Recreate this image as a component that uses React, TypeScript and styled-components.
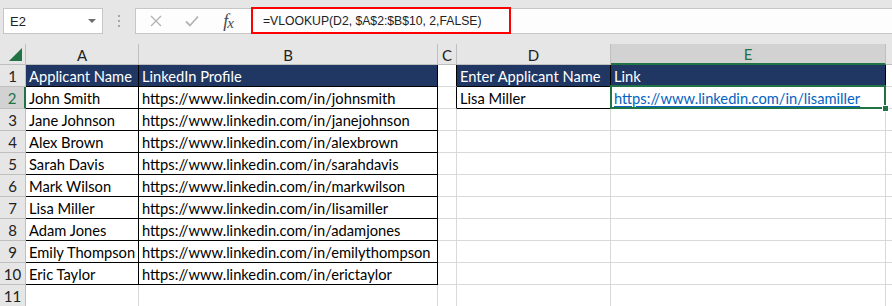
import React from 'react';
import styled, { createGlobalStyle } from 'styled-components';

const Global = createGlobalStyle`
  html, body { margin: 0; padding: 0; background: #ffffff; }
  body { font-family: "Lato", "Liberation Sans", sans-serif; overflow: hidden; }
  #root { width: 892px; height: 306px; overflow: hidden; }
`;

const GREEN = '#217346';
const GRID = '#d9d9d9';
const HEAD_LINE = '#bfbfbf';
const NAVY = '#203764';

const Page = styled.div`
  width: 892px;
  height: 306px;
  display: flex;
  flex-direction: column;
  overflow: hidden;
`;

const TopBar = styled.div`
  height: 44px;
  flex: none;
  background: #e6e6e6;
  display: flex;
  align-items: flex-start;
  padding-top: 8px;
  box-sizing: border-box;
`;

const NameBox = styled.div`
  margin-left: 3px;
  width: 100px;
  height: 26px;
  box-sizing: border-box;
  background: #ffffff;
  border: 1px solid #c6c6c6;
  display: flex;
  align-items: center;
  justify-content: space-between;
  padding: 0 6px 0 6px;
  font-family: "Liberation Sans", Arial, sans-serif;
  font-size: 13px;
  color: #222;
`;

const DropArrow = styled.span`
  width: 0;
  height: 0;
  border-left: 4px solid transparent;
  border-right: 4px solid transparent;
  border-top: 4px solid #6d6d6d;
`;

const Dots = styled.div`
  width: 32px;
  height: 26px;
  display: flex;
  flex-direction: column;
  align-items: center;
  justify-content: center;
  gap: 3px;
  span {
    width: 2px;
    height: 2px;
    background: #a6a6a6;
  }
`;

const FormulaArea = styled.div`
  flex: 1;
  height: 26px;
  box-sizing: border-box;
  background: #fdfdfd;
  border-top: 1px solid #c6c6c6;
  border-bottom: 1px solid #c6c6c6;
  border-left: 1px solid #c6c6c6;
  display: flex;
  align-items: center;
`;

const IconSlot = styled.div`
  width: 36px;
  height: 24px;
  display: flex;
  align-items: center;
  justify-content: center;
  &:first-child { margin-left: 2px; }
`;

const Fx = styled.span`
  font-family: "Liberation Serif", "Times New Roman", serif;
  font-style: italic;
  font-size: 18px;
  color: #4a4a4a;
  letter-spacing: -1px;
  sub {
    font-size: 15px;
    vertical-align: baseline;
    position: relative;
    top: 1px;
  }
`;

const FormulaText = styled.div`
  margin-left: 5px;
  margin-top: -1px;
  width: 260px;
  height: 27px;
  box-sizing: border-box;
  border: 2px solid #ff0000;
  display: flex;
  align-items: center;
  padding-left: 10px;
  font-family: "Liberation Sans", Arial, sans-serif;
  font-size: 12.2px;
  color: #222;
`;

const Sheet = styled.div`
  display: grid;
  grid-template-columns: 26px 113px 299px 19px 154px 275px 1fr;
  grid-template-rows: 21px;
  grid-auto-rows: 22px;
  font-size: 14.7px;
`;

type CellProps = {
  $bg?: string;
  $fg?: string;
  $br?: string;
  $bb?: string;
};

const Cell = styled.div<CellProps>`
  box-sizing: border-box;
  background: ${(p) => p.$bg ?? '#ffffff'};
  color: ${(p) => p.$fg ?? '#000000'};
  border-right: 1px solid ${(p) => p.$br ?? GRID};
  border-bottom: 1px solid ${(p) => p.$bb ?? GRID};
  display: flex;
  align-items: center;
  padding: 0 3px;
  white-space: nowrap;
  overflow: visible;
  position: relative;
`;

const Corner = styled(Cell)`
  background: #e6e6e6;
  border-right-color: ${HEAD_LINE};
  border-bottom-color: ${HEAD_LINE};
  &::after {
    content: '';
    position: absolute;
    right: 3px;
    bottom: 3px;
    width: 0;
    height: 0;
    border-left: 13px solid transparent;
    border-bottom: 13px solid ${GREEN};
  }
`;

const ColHead = styled(Cell)<{ $active?: boolean }>`
  background: ${(p) => (p.$active ? '#d2d2d2' : '#e6e6e6')};
  color: ${(p) => (p.$active ? GREEN : '#222')};
  border-right-color: ${HEAD_LINE};
  border-bottom: ${(p) => (p.$active ? `2px solid ${GREEN}` : `1px solid ${HEAD_LINE}`)};
  justify-content: center;
  padding-top: 1px;
  font-size: 15px;
`;

const RowHead = styled(Cell)<{ $active?: boolean }>`
  background: ${(p) => (p.$active ? '#d2d2d2' : '#e6e6e6')};
  color: ${(p) => (p.$active ? GREEN : '#222')};
  border-right: ${(p) => (p.$active ? `2px solid ${GREEN}` : `1px solid ${HEAD_LINE}`)};
  border-bottom-color: ${HEAD_LINE};
  justify-content: center;
  padding: 0;
  font-size: 15px;
`;

const Link = styled.a`
  color: #0563c1;
  text-decoration: underline;
  text-underline-offset: 2px;
`;

const Selected = styled(Cell)`
  &::after {
    content: '';
    position: absolute;
    left: -1px;
    top: -2px;
    right: -1px;
    bottom: -1px;
    border: 2px solid ${GREEN};
    pointer-events: none;
  }
  &::before {
    content: '';
    position: absolute;
    right: -4px;
    bottom: -4px;
    width: 5px;
    height: 5px;
    background: ${GREEN};
    border: 1px solid #ffffff;
    z-index: 2;
  }
`;

const people: [string, string][] = [
  ['John Smith', 'johnsmith'],
  ['Jane Johnson', 'janejohnson'],
  ['Alex Brown', 'alexbrown'],
  ['Sarah Davis', 'sarahdavis'],
  ['Mark Wilson', 'markwilson'],
  ['Lisa Miller', 'lisamiller'],
  ['Adam Jones', 'adamjones'],
  ['Emily Thompson', 'emilythompson'],
  ['Eric Taylor', 'erictaylor'],
];

const XIcon = () => (
  <svg width="12" height="12" viewBox="0 0 12 12">
    <path d="M1 1 L11 11 M11 1 L1 11" stroke="#b4b4b4" strokeWidth="1.4" fill="none" />
  </svg>
);

const CheckIcon = () => (
  <svg width="14" height="12" viewBox="0 0 14 12">
    <path d="M1 6.5 L5 10.5 L13 1.5" stroke="#b4b4b4" strokeWidth="1.8" fill="none" />
  </svg>
);

export default function App() {
  return (
    <Page>
      <Global />
      <TopBar>
        <NameBox>
          E2
          <DropArrow />
        </NameBox>
        <Dots>
          <span />
          <span />
          <span />
        </Dots>
        <FormulaArea>
          <IconSlot>
            <XIcon />
          </IconSlot>
          <IconSlot>
            <CheckIcon />
          </IconSlot>
          <IconSlot>
            <Fx>
              f<sub>x</sub>
            </Fx>
          </IconSlot>
          <FormulaText>=VLOOKUP(D2, $A$2:$B$10, 2,FALSE)</FormulaText>
        </FormulaArea>
      </TopBar>
      <Sheet>
        <Corner />
        <ColHead>A</ColHead>
        <ColHead>B</ColHead>
        <ColHead>C</ColHead>
        <ColHead>D</ColHead>
        <ColHead $active>E</ColHead>
        <ColHead />

        <RowHead>1</RowHead>
        <Cell $bg={NAVY} $fg="#ffffff" $br="#000" $bb="#000">Applicant Name</Cell>
        <Cell $bg={NAVY} $fg="#ffffff" $br="#000" $bb="#000">LinkedIn Profile</Cell>
        <Cell $br="#000" />
        <Cell $bg={NAVY} $fg="#ffffff" $br="#000" $bb="#000">Enter Applicant Name</Cell>
        <Cell $bg={NAVY} $fg="#ffffff" $br="#000" $bb="#000">Link</Cell>
        <Cell />

        {people.map(([name, slug], i) => (
          <React.Fragment key={slug}>
            <RowHead $active={i === 0}>{i + 2}</RowHead>
            <Cell $br="#000" $bb="#000">{name}</Cell>
            <Cell $br="#000" $bb="#000">https://www.linkedin.com/in/{slug}</Cell>
            <Cell $br={i === 0 ? '#000' : GRID} />
            {i === 0 ? (
              <>
                <Cell $br="#000" $bb="#000">Lisa Miller</Cell>
                <Selected $br="#000" $bb="#000">
                  <Link>https://www.linkedin.com/in/lisamiller</Link>
                </Selected>
              </>
            ) : (
              <>
                <Cell />
                <Cell />
              </>
            )}
            <Cell />
          </React.Fragment>
        ))}

        <RowHead>11</RowHead>
        <Cell />
        <Cell />
        <Cell />
        <Cell />
        <Cell />
        <Cell />
      </Sheet>
    </Page>
  );
}
